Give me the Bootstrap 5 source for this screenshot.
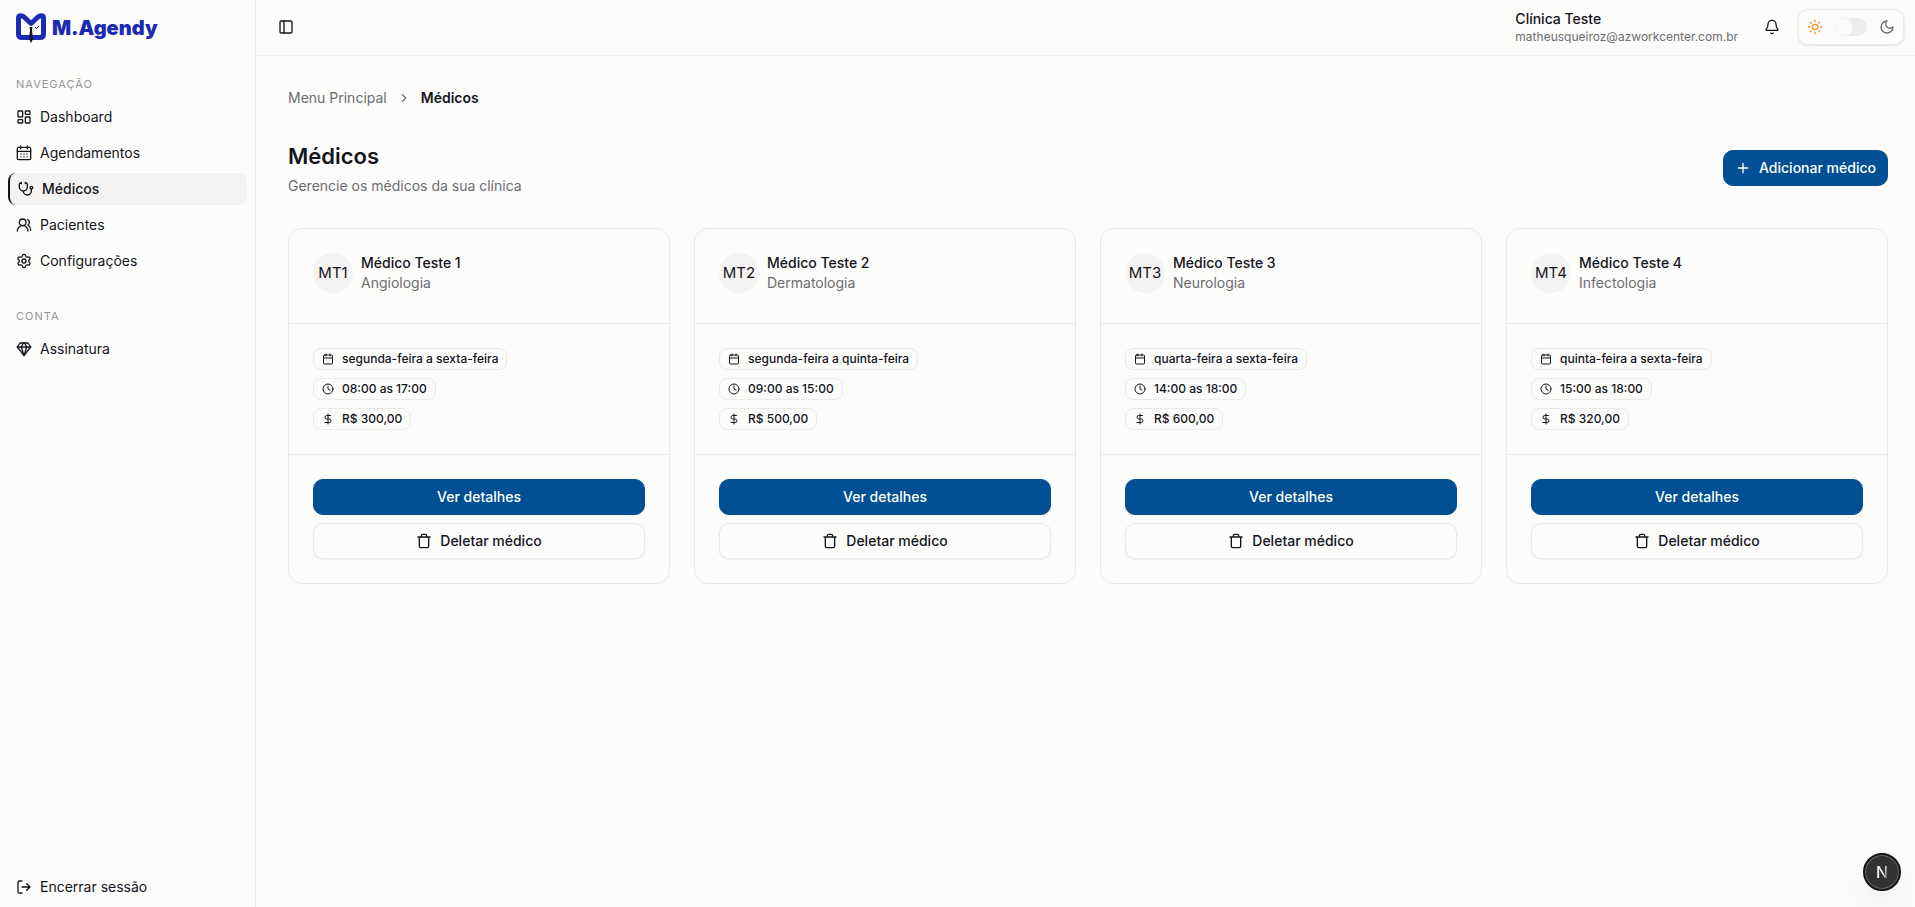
<!DOCTYPE html>
<html lang="pt-BR">
<head>
<meta charset="utf-8">
<meta name="viewport" content="width=device-width, initial-scale=1">
<title>M.Agendy – Médicos</title>
<link href="https://cdn.jsdelivr.net/npm/bootstrap@5.3.0/dist/css/bootstrap.min.css" rel="stylesheet">
<style>
  :root { --ink:#14141c; --muted:#6c6d73; --line:#eaeae9; --page:#fcfcfa; --soft:#f4f3f2; --brand:#005093; }
  body { font-family:Inter,"Liberation Sans",sans-serif; font-size:14px; line-height:20px; color:var(--ink); background:var(--page); }
  .ic { width:16px; height:16px; flex:none; fill:none; stroke:currentColor; stroke-width:2; stroke-linecap:round; stroke-linejoin:round; }
  .ic-sm { width:14px; height:14px; }
  .ic-xs { width:12px; height:12px; }
  .muted { color:var(--muted); }
  .sun { color:#f0982c; }
  .sidebar { width:256px; flex:none; border-right:1px solid var(--line); }
  .brand { height:56px; padding:0 16px; gap:6px; color:#1b2bb3; text-decoration:none; font-size:20px; font-weight:900; }
  .brand:hover { color:#1b2bb3; }
  .brand svg { width:30px; height:30px; }
  .side-label { font-size:11px; letter-spacing:1px; color:#96969a; padding:0 8px; line-height:32px; text-transform:uppercase; margin:0 0 1px; font-weight:400; }
  .side-group + .side-group { margin-top:23px; }
  .side-link { display:flex; align-items:center; gap:8px; height:32px; padding:0 8px; color:var(--ink); text-decoration:none; border-radius:8px; width:100%; border:0; background:none; }
  .side-link.current { background:var(--soft); border-left:2px solid var(--ink); font-weight:500; }
  .side-nav { display:flex; flex-direction:column; gap:4px; list-style:none; margin:0; padding:0; }
  .topbar { height:56px; border-bottom:1px solid #f1f1f0; padding:0 11px 1px 14px; }
  .plain { border:0; background:none; color:var(--ink); padding:8px; display:flex; }
  .account { margin-right:18px; }
  .email { font-size:12px; line-height:16px; }
  .bell { padding:8px; margin-right:10px; }
  .theme-box { border:1px solid var(--line); border-radius:10px; height:36px; padding:0 8px; gap:12px; box-shadow:0 1px 3px rgba(0,0,0,.12); }
  .theme-box .form-check-input { width:32px; height:18px; margin:0; border:0; background-color:#ececeb; background-image:radial-gradient(circle at center,#fcfcfa 8px,transparent 9px); background-size:18px 18px; background-position:left center; box-shadow:none; }
  .content { padding:32px 27px 32px 32px; }
  .breadcrumb { gap:10px; line-height:20px; }
  .breadcrumb a { color:var(--muted); text-decoration:none; }
  .page-head { padding:32px 0; }
  h1 { font-size:22px; line-height:32px; font-weight:600; margin:0 0 4px; }
  .btn { --bs-btn-padding-x:11px; --bs-btn-font-size:14px; --bs-btn-line-height:20px; --bs-btn-border-radius:10px; height:36px; font-weight:500; display:inline-flex; align-items:center; justify-content:center; }
  .btn-brand { --bs-btn-color:#fff; --bs-btn-bg:var(--brand); --bs-btn-border-color:var(--brand); --bs-btn-hover-color:#fff; --bs-btn-hover-bg:#00437b; }
  .btn-line { --bs-btn-color:var(--ink); --bs-btn-bg:var(--page); --bs-btn-border-color:var(--line); --bs-btn-hover-bg:var(--soft); --bs-btn-hover-border-color:var(--line); box-shadow:0 1px 2px rgba(0,0,0,.07); }
  .doctor { --bs-card-bg:var(--page); --bs-card-border-color:var(--line); --bs-card-border-radius:14px; color:var(--ink); }
  .doctor > * { padding:24px; }
  .doctor > * + * { border-top:1px solid var(--line); }
  .doctor .doctor-head { padding-bottom:30px; gap:8px; }
  .avatar { width:40px; height:40px; flex:none; border-radius:50%; background:var(--soft); font-size:15px; }
  .doctor h2 { font-size:14px; line-height:20px; font-weight:500; margin:0; }
  .tag { display:inline-flex; align-items:center; gap:8px; height:22px; padding:0 8px; border:1px solid var(--line); border-radius:8px; font-size:12px; line-height:16px; font-weight:500; }
  .dev { width:38px; height:38px; right:14px; bottom:16px; border-radius:50%; border:2px solid #161616; background:#323234; box-shadow:0 0 0 1px #6a6a6a inset,0 16px 32px -8px rgba(0,0,0,.14); padding:0; font-size:16px; line-height:20px; font-weight:500; }
  .dev span { color:transparent; background:linear-gradient(100deg,#fff 55%,#777 85%); -webkit-background-clip:text; background-clip:text; }
</style>
</head>
<body>
<svg class="d-none" aria-hidden="true">
  <symbol id="i-dash" viewBox="0 0 24 24"><rect width="7" height="9" x="3" y="3" rx="1"/><rect width="7" height="5" x="14" y="3" rx="1"/><rect width="7" height="9" x="14" y="12" rx="1"/><rect width="7" height="5" x="3" y="16" rx="1"/></symbol>
  <symbol id="i-days" viewBox="0 0 24 24"><path d="M7 1.500v4M17 1.500v4M2 9.500h20"/><rect width="20" height="18.500" x="2" y="3.500" rx="2"/><path d="M7.500 13.500h.01M12 13.500h.01M16.500 13.500h.01M7.500 17.500h.01M12 17.500h.01M16.500 17.500h.01"/></symbol>
  <symbol id="i-steth" viewBox="0 0 24 24"><path d="M11 2v2M5 2v2M5 3H4a2 2 0 0 0-2 2v4a6 6 0 0 0 12 0V5a2 2 0 0 0-2-2h-1M8 15a6 6 0 0 0 12 0v-3"/><circle cx="20" cy="10" r="2"/></symbol>
  <symbol id="i-users" viewBox="0 0 24 24"><path d="M18 21a8 8 0 0 0-16 0"/><circle cx="10" cy="8" r="5"/><path d="M22 20c0-3.37-2-6.5-4-8a5 5 0 0 0-.45-8.3"/></symbol>
  <symbol id="i-cog" viewBox="0 0 24 24"><path d="M9.671 4.136a2.340 2.340 0 0 1 4.659 0 2.340 2.340 0 0 0 3.319 1.915 2.340 2.340 0 0 1 2.330 4.033 2.340 2.340 0 0 0 0 3.831 2.340 2.340 0 0 1-2.330 4.033 2.340 2.340 0 0 0-3.319 1.915 2.340 2.340 0 0 1-4.659 0 2.340 2.340 0 0 0-3.320-1.915 2.340 2.340 0 0 1-2.330-4.033 2.340 2.340 0 0 0 0-3.831A2.340 2.340 0 0 1 6.350 6.051a2.340 2.340 0 0 0 3.319-1.915"/><circle cx="12" cy="12" r="3"/></symbol>
  <symbol id="i-gem" viewBox="0 0 24 24"><path d="M6 3h12l4 6-10 13L2 9Z"/><path d="M11 3 8 9l4 13 4-13-3-6M2 9h20"/></symbol>
  <symbol id="i-out" viewBox="0 0 24 24"><path d="M9 21H5a2 2 0 0 1-2-2V5a2 2 0 0 1 2-2h4M16 17l5-5-5-5M21 12H9"/></symbol>
  <symbol id="i-panel" viewBox="0 0 24 24"><rect width="18" height="18" x="3" y="3" rx="2"/><path d="M9 3v18"/></symbol>
  <symbol id="i-bell" viewBox="0 0 24 24"><path d="M10.268 21a2 2 0 0 0 3.464 0M3.262 15.326A1 1 0 0 0 4 17h16a1 1 0 0 0 .74-1.673C19.41 13.956 18 12.499 18 8A6 6 0 0 0 6 8c0 4.499-1.411 5.956-2.738 7.326"/></symbol>
  <symbol id="i-sun" viewBox="0 0 24 24"><circle cx="12" cy="12" r="4"/><path d="M12 2v2M12 20v2M4.93 4.93l1.41 1.41M17.66 17.66l1.41 1.41M2 12h2M20 12h2M6.34 17.66l-1.41 1.41M19.07 4.93l-1.41 1.41"/></symbol>
  <symbol id="i-moon" viewBox="0 0 24 24"><path d="M12 3a6 6 0 0 0 9 9 9 9 0 1 1-9-9Z"/></symbol>
  <symbol id="i-chev" viewBox="0 0 24 24"><path d="m9 18 6-6-6-6"/></symbol>
  <symbol id="i-plus" viewBox="0 0 24 24"><path d="M5 12h14M12 5v14"/></symbol>
  <symbol id="i-cal" viewBox="0 0 24 24"><path d="M8 2v4M16 2v4M3 10h18"/><rect width="18" height="18" x="3" y="4" rx="2"/></symbol>
  <symbol id="i-clock" viewBox="0 0 24 24"><circle cx="12" cy="12" r="10"/><path d="M12 6v6l4 2"/></symbol>
  <symbol id="i-money" viewBox="0 0 24 24"><path d="M12 2v20M17 5H9.5a3.5 3.5 0 0 0 0 7h5a3.5 3.5 0 0 1 0 7H6"/></symbol>
  <symbol id="i-trash" viewBox="0 0 24 24"><path d="M3 6h18M19 6v14a2 2 0 0 1-2 2H7a2 2 0 0 1-2-2V6M8 6V4a2 2 0 0 1 2-2h4a2 2 0 0 1 2 2v2"/></symbol>
</svg>

<div class="d-flex min-vh-100">
  <aside class="sidebar d-flex flex-column">
    <a href="#" class="brand d-flex align-items-center">
      <svg viewBox="0 0 30 30" aria-hidden="true"><path d="M15 10.500 L7.500 3.500 Q2.500 1.500 2.500 5 V21 Q2.500 24.500 6 24.500 H24 Q27.500 24.500 27.500 21 V5 Q27.500 1.500 22.500 3.500Z" fill="none" stroke="#1b2bb3" stroke-width="5" stroke-linejoin="round"/><path d="M13.500 14h3l-.5 3 1 9-2 4-2-4 1-9z" fill="#191923"/><path d="m19 14 1.500 1.500L23 13" fill="none" stroke="#191923"/></svg>
      <span>M.Agendy</span>
    </a>
    <nav class="d-flex flex-column flex-grow-1 px-2 pt-2 pb-1">
      <div class="side-group mt-1">
        <h2 class="side-label">Navegação</h2>
        <ul class="side-nav">
          <li><a class="side-link" href="#"><svg class="ic"><use href="#i-dash"/></svg>Dashboard</a></li>
          <li><a class="side-link" href="#"><svg class="ic"><use href="#i-days"/></svg>Agendamentos</a></li>
          <li><a class="side-link current" href="#" aria-current="page"><svg class="ic"><use href="#i-steth"/></svg>Médicos</a></li>
          <li><a class="side-link" href="#"><svg class="ic"><use href="#i-users"/></svg>Pacientes</a></li>
          <li><a class="side-link" href="#"><svg class="ic"><use href="#i-cog"/></svg>Configurações</a></li>
        </ul>
      </div>
      <div class="side-group">
        <h2 class="side-label">Conta</h2>
        <ul class="side-nav">
          <li><a class="side-link" href="#"><svg class="ic"><use href="#i-gem"/></svg>Assinatura</a></li>
        </ul>
      </div>
      <button type="button" class="side-link mt-auto"><svg class="ic"><use href="#i-out"/></svg>Encerrar sessão</button>
    </nav>
  </aside>

  <div class="flex-grow-1">
    <header class="topbar d-flex align-items-center">
      <button type="button" class="plain me-auto" aria-label="Alternar menu"><svg class="ic"><use href="#i-panel"/></svg></button>
      <div class="account">
        <div class="fw-medium">Clínica Teste</div>
        <div class="email muted">matheusqueiroz@azworkcenter.com.br</div>
      </div>
      <button type="button" class="plain bell" aria-label="Notificações"><svg class="ic"><use href="#i-bell"/></svg></button>
      <div class="theme-box d-flex align-items-center">
        <svg class="ic sun"><use href="#i-sun"/></svg>
        <div class="form-switch p-0 m-0 d-flex"><input class="form-check-input" type="checkbox" role="switch" aria-label="Tema escuro"></div>
        <svg class="ic muted"><use href="#i-moon"/></svg>
      </div>
    </header>

    <main class="content">
      <nav aria-label="Trilha">
        <ol class="breadcrumb align-items-center mb-0">
          <li><a href="#">Menu Principal</a></li>
          <li class="d-flex muted" aria-hidden="true"><svg class="ic ic-sm"><use href="#i-chev"/></svg></li>
          <li class="fw-semibold" aria-current="page">Médicos</li>
        </ol>
      </nav>
      <div class="page-head d-flex align-items-center justify-content-between">
        <div>
          <h1>Médicos</h1>
          <p class="muted mb-0">Gerencie os médicos da sua clínica</p>
        </div>
        <button type="button" class="btn btn-brand gap-2"><svg class="ic"><use href="#i-plus"/></svg>Adicionar médico</button>
      </div>

      <div class="row row-cols-1 row-cols-md-2 row-cols-xl-4 g-4">
        <div class="col"><article class="card doctor">
          <div class="doctor-head d-flex"><span class="avatar d-flex align-items-center justify-content-center">MT1</span><div><h2>Médico Teste 1</h2><div class="muted">Angiologia</div></div></div>
          <div class="d-flex flex-column align-items-start gap-2"><span class="tag"><svg class="ic ic-xs"><use href="#i-cal"/></svg>segunda-feira a sexta-feira</span><span class="tag"><svg class="ic ic-xs"><use href="#i-clock"/></svg>08:00 as 17:00</span><span class="tag"><svg class="ic ic-xs"><use href="#i-money"/></svg>R$ 300,00</span></div>
          <div class="d-grid gap-2"><button type="button" class="btn btn-brand">Ver detalhes</button><button type="button" class="btn btn-line gap-2"><svg class="ic"><use href="#i-trash"/></svg>Deletar médico</button></div>
        </article></div>
        <div class="col"><article class="card doctor">
          <div class="doctor-head d-flex"><span class="avatar d-flex align-items-center justify-content-center">MT2</span><div><h2>Médico Teste 2</h2><div class="muted">Dermatologia</div></div></div>
          <div class="d-flex flex-column align-items-start gap-2"><span class="tag"><svg class="ic ic-xs"><use href="#i-cal"/></svg>segunda-feira a quinta-feira</span><span class="tag"><svg class="ic ic-xs"><use href="#i-clock"/></svg>09:00 as 15:00</span><span class="tag"><svg class="ic ic-xs"><use href="#i-money"/></svg>R$ 500,00</span></div>
          <div class="d-grid gap-2"><button type="button" class="btn btn-brand">Ver detalhes</button><button type="button" class="btn btn-line gap-2"><svg class="ic"><use href="#i-trash"/></svg>Deletar médico</button></div>
        </article></div>
        <div class="col"><article class="card doctor">
          <div class="doctor-head d-flex"><span class="avatar d-flex align-items-center justify-content-center">MT3</span><div><h2>Médico Teste 3</h2><div class="muted">Neurologia</div></div></div>
          <div class="d-flex flex-column align-items-start gap-2"><span class="tag"><svg class="ic ic-xs"><use href="#i-cal"/></svg>quarta-feira a sexta-feira</span><span class="tag"><svg class="ic ic-xs"><use href="#i-clock"/></svg>14:00 as 18:00</span><span class="tag"><svg class="ic ic-xs"><use href="#i-money"/></svg>R$ 600,00</span></div>
          <div class="d-grid gap-2"><button type="button" class="btn btn-brand">Ver detalhes</button><button type="button" class="btn btn-line gap-2"><svg class="ic"><use href="#i-trash"/></svg>Deletar médico</button></div>
        </article></div>
        <div class="col"><article class="card doctor">
          <div class="doctor-head d-flex"><span class="avatar d-flex align-items-center justify-content-center">MT4</span><div><h2>Médico Teste 4</h2><div class="muted">Infectologia</div></div></div>
          <div class="d-flex flex-column align-items-start gap-2"><span class="tag"><svg class="ic ic-xs"><use href="#i-cal"/></svg>quinta-feira a sexta-feira</span><span class="tag"><svg class="ic ic-xs"><use href="#i-clock"/></svg>15:00 as 18:00</span><span class="tag"><svg class="ic ic-xs"><use href="#i-money"/></svg>R$ 320,00</span></div>
          <div class="d-grid gap-2"><button type="button" class="btn btn-brand">Ver detalhes</button><button type="button" class="btn btn-line gap-2"><svg class="ic"><use href="#i-trash"/></svg>Deletar médico</button></div>
        </article></div>
      </div>
    </main>
  </div>
</div>
<button type="button" class="dev position-fixed" aria-label="Next.js"><span>N</span></button>
<script src="https://cdn.jsdelivr.net/npm/bootstrap@5.3.0/dist/js/bootstrap.bundle.min.js"></script>
</body>
</html>
